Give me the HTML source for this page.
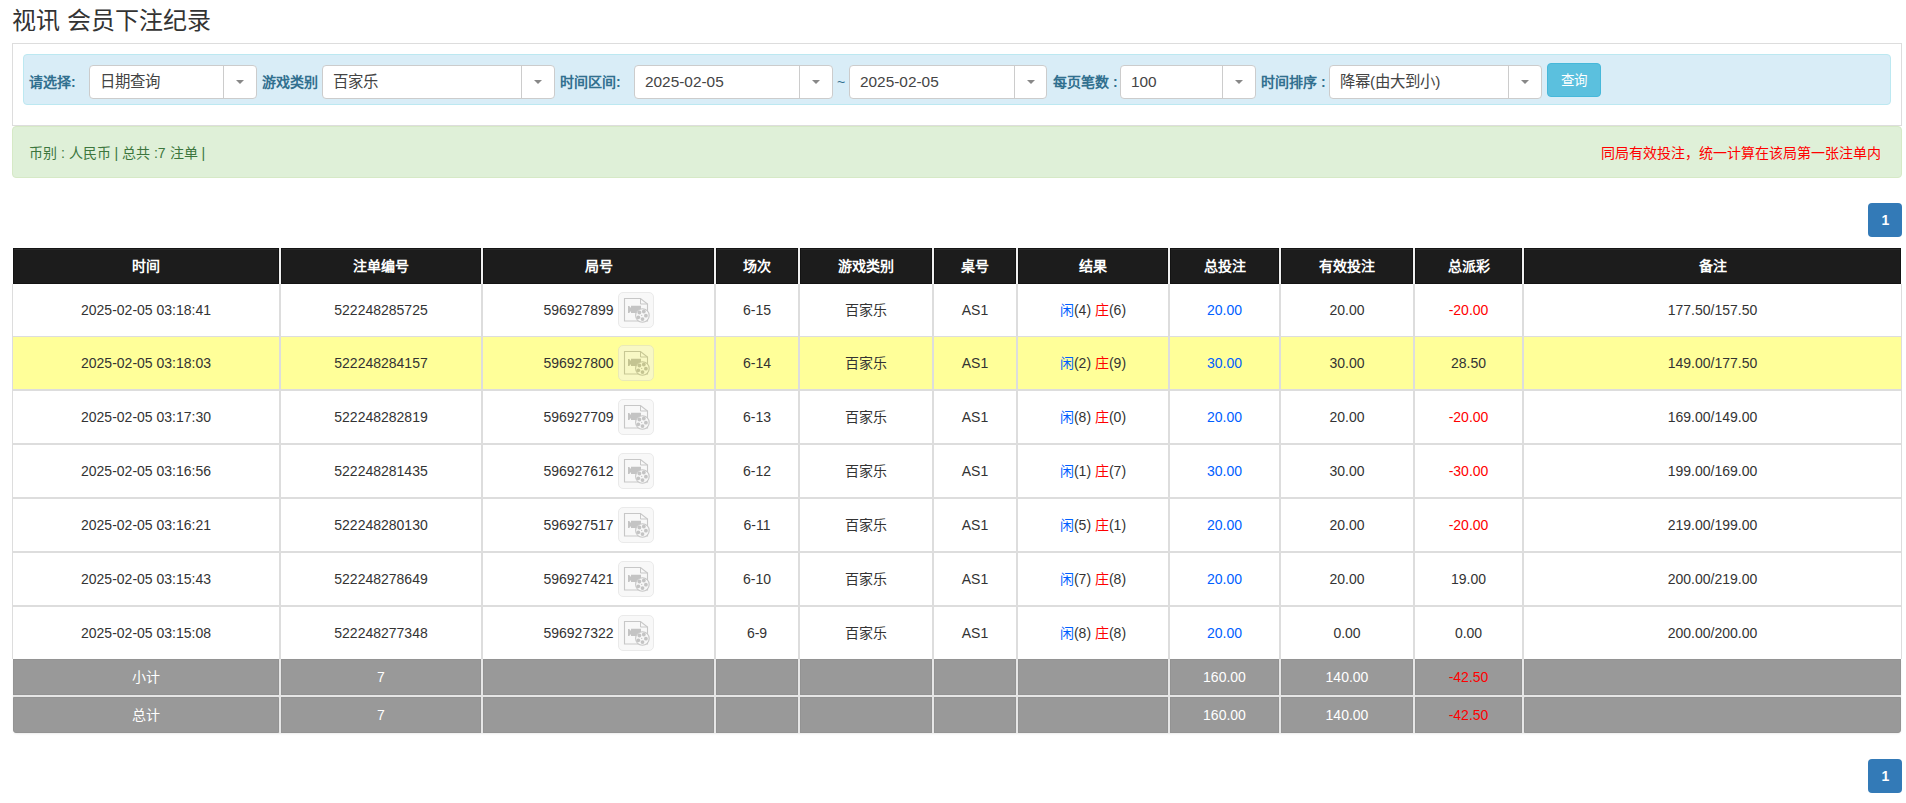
<!DOCTYPE html><html lang="zh-CN"><head><meta charset="utf-8"><style>
*{box-sizing:border-box;margin:0;padding:0}
html,body{width:1906px;height:803px;overflow:hidden;background:#fff}
body{font-family:"Liberation Sans", sans-serif;color:#333;font-size:14px;position:relative}
.a{position:absolute}
.title{left:12px;top:5px;font-size:24px;line-height:32px;color:#333;white-space:nowrap}
.panel{left:12px;top:43px;width:1890px;height:83px;border:1px solid #ddd;background:#fff}
.info{left:23px;top:54px;width:1868px;height:51px;background:#d9edf7;border:1px solid #bce8f1;border-radius:4px}
.lbl{font-size:14px;font-weight:bold;color:#31708f;line-height:20px;top:72px;white-space:nowrap}
.sel{top:65px;height:34px;background:#fff;border:1px solid #ccc;border-radius:4px}
.sel .t{position:absolute;left:10px;top:0;line-height:32px;font-size:15.4px;color:#444;white-space:nowrap}
.sel .d{position:absolute;top:0;bottom:0;width:1px;background:#ccc}
.sel .ar{position:absolute;top:14px;width:0;height:0;border-left:4px solid transparent;border-right:4px solid transparent;border-top:4px solid #888}
.btn{left:1547px;top:63px;width:54px;height:34px;background:#5bc0de;border:1px solid #46b8da;border-radius:4px;color:#fff;font-size:13.5px;line-height:33px;text-align:center}
.ok{left:12px;top:126px;width:1890px;height:52px;background:#dff0d8;border:1px solid #d6e9c6;border-radius:4px}
.okt{left:29px;top:143px;font-size:14px;line-height:20px;color:#3c763d;white-space:nowrap}
.red{right:25px;top:143px;font-size:14px;line-height:20px;color:#f00;white-space:nowrap}
.pg{left:1868px;width:34px;height:34px;background:#337ab7;border-radius:4px;color:#fff;font-size:14px;font-weight:bold;line-height:34px;text-align:center;padding-left:1px}
.hd{background:#1c1c1c;border:1px solid #131313;border-top-color:#151515;box-shadow:inset 0 1px 0 #2a2a2a;color:#fff;font-weight:bold;font-size:14px;text-align:center;line-height:34px}
.c{background:#fff;text-align:center;font-size:14px;color:#333;white-space:nowrap}
.y{background:#ffff99}
.g{background:#999;border:1px solid #939393;color:#fff;text-align:center;font-size:14px;line-height:34px;white-space:nowrap}
.bl{color:#0060ff}
.rd{color:#ff0000}
.ic{display:inline-block;vertical-align:top;margin-top:8px;width:36px;height:36px;border:1px solid #d6d6d6;border-radius:5px;background:#f2f2f2;opacity:.5;position:relative;margin-left:4px}
</style></head><body><div class="a title">视讯 会员下注纪录</div>
<div class="a panel"></div>
<div class="a info"></div>
<div class="a lbl" style="left:29px">请选择:</div>
<div class="a sel" style="left:89px;width:168px"><span class="t">日期查询</span><i class="d" style="left:133px"></i><i class="ar" style="left:146px"></i></div>
<div class="a lbl" style="left:262px">游戏类别</div>
<div class="a sel" style="left:322px;width:233px"><span class="t">百家乐</span><i class="d" style="left:198px"></i><i class="ar" style="left:211px"></i></div>
<div class="a lbl" style="left:560px">时间区间:</div>
<div class="a sel" style="left:634px;width:199px"><span class="t">2025-02-05</span><i class="d" style="left:164px"></i><i class="ar" style="left:177px"></i></div>
<div class="a lbl" style="left:837px;font-weight:normal">~</div>
<div class="a sel" style="left:849px;width:198px"><span class="t">2025-02-05</span><i class="d" style="left:164px"></i><i class="ar" style="left:177px"></i></div>
<div class="a lbl" style="left:1053px">每页笔数 :</div>
<div class="a sel" style="left:1120px;width:136px"><span class="t">100</span><i class="d" style="left:101px"></i><i class="ar" style="left:114px"></i></div>
<div class="a lbl" style="left:1261px">时间排序 :</div>
<div class="a sel" style="left:1329px;width:213px"><span class="t">降幂(由大到小)</span><i class="d" style="left:178px"></i><i class="ar" style="left:191px"></i></div>
<div class="a btn">查询</div>
<div class="a ok"></div>
<div class="a okt">币别 : 人民币 | 总共 :7 注单 |</div>
<div class="a red">同局有效投注，统一计算在该局第一张注单内</div>
<div class="a pg" style="top:203px">1</div>
<div class="a pg" style="top:759px">1</div>
<div class="a" style="left:12px;top:284px;width:1890px;height:375px;background:#ddd"></div>
<div class="a" style="left:13px;top:248px;width:1888px;height:36px;background:#f0f0f0"></div>
<div class="a hd" style="left:13px;top:248px;width:266px;height:36px">时间</div>
<div class="a hd" style="left:281px;top:248px;width:200px;height:36px">注单编号</div>
<div class="a hd" style="left:483px;top:248px;width:231px;height:36px">局号</div>
<div class="a hd" style="left:716px;top:248px;width:82px;height:36px">场次</div>
<div class="a hd" style="left:800px;top:248px;width:132px;height:36px">游戏类别</div>
<div class="a hd" style="left:934px;top:248px;width:82px;height:36px">桌号</div>
<div class="a hd" style="left:1018px;top:248px;width:150px;height:36px">结果</div>
<div class="a hd" style="left:1170px;top:248px;width:109px;height:36px">总投注</div>
<div class="a hd" style="left:1281px;top:248px;width:132px;height:36px">有效投注</div>
<div class="a hd" style="left:1415px;top:248px;width:107px;height:36px">总派彩</div>
<div class="a hd" style="left:1524px;top:248px;width:377px;height:36px">备注</div>
<div class="a c" style="left:13px;top:284px;width:266px;height:52px;line-height:52px">2025-02-05 03:18:41</div>
<div class="a c" style="left:281px;top:284px;width:200px;height:52px;line-height:52px">522248285725</div>
<div class="a c" style="left:483px;top:284px;width:231px;height:52px;line-height:52px">596927899<span class="ic"><svg width="36" height="36" viewBox="0 0 36 36" style="position:absolute;left:-1px;top:-1px"><path d="M6.5 6.5h16l7 5.5v17h-23z" fill="none" stroke="#919191" stroke-width="1.1"/><path d="M22.5 6.5v5.5h7" fill="none" stroke="#919191" stroke-width="1"/><path d="M10 14h1.2l1.8 2v-2.2h10v7.3h-10v-2.1l-1.8 2h-1.2z" fill="#8a8a8a"/><circle cx="24.4" cy="23.5" r="6.8" fill="#f0f0f0" stroke="#919191" stroke-width="1.1"/><circle cx="21.4" cy="20.5" r="1.9" fill="#8a8a8a"/><circle cx="25.8" cy="19.5" r="1.9" fill="#8a8a8a"/><circle cx="27.9" cy="23.7" r="1.9" fill="#8a8a8a"/><circle cx="24.5" cy="27.1" r="1.9" fill="#8a8a8a"/><circle cx="20.3" cy="25.3" r="1.9" fill="#8a8a8a"/><circle cx="23.7" cy="23.4" r="0.6" fill="#8a8a8a"/></svg></span></div>
<div class="a c" style="left:716px;top:284px;width:82px;height:52px;line-height:52px">6-15</div>
<div class="a c" style="left:800px;top:284px;width:132px;height:52px;line-height:52px">百家乐</div>
<div class="a c" style="left:934px;top:284px;width:82px;height:52px;line-height:52px">AS1</div>
<div class="a c" style="left:1018px;top:284px;width:150px;height:52px;line-height:52px"><span class="bl">闲</span>(4) <span class="rd">庄</span>(6)</div>
<div class="a c" style="left:1170px;top:284px;width:109px;height:52px;line-height:52px"><span class="bl">20.00</span></div>
<div class="a c" style="left:1281px;top:284px;width:132px;height:52px;line-height:52px">20.00</div>
<div class="a c" style="left:1415px;top:284px;width:107px;height:52px;line-height:52px"><span class="rd">-20.00</span></div>
<div class="a c" style="left:1524px;top:284px;width:377px;height:52px;line-height:52px">177.50/157.50</div>
<div class="a c y" style="left:13px;top:337px;width:266px;height:52px;line-height:52px">2025-02-05 03:18:03</div>
<div class="a c y" style="left:281px;top:337px;width:200px;height:52px;line-height:52px">522248284157</div>
<div class="a c y" style="left:483px;top:337px;width:231px;height:52px;line-height:52px">596927800<span class="ic"><svg width="36" height="36" viewBox="0 0 36 36" style="position:absolute;left:-1px;top:-1px"><path d="M6.5 6.5h16l7 5.5v17h-23z" fill="none" stroke="#919191" stroke-width="1.1"/><path d="M22.5 6.5v5.5h7" fill="none" stroke="#919191" stroke-width="1"/><path d="M10 14h1.2l1.8 2v-2.2h10v7.3h-10v-2.1l-1.8 2h-1.2z" fill="#8a8a8a"/><circle cx="24.4" cy="23.5" r="6.8" fill="#f0f0f0" stroke="#919191" stroke-width="1.1"/><circle cx="21.4" cy="20.5" r="1.9" fill="#8a8a8a"/><circle cx="25.8" cy="19.5" r="1.9" fill="#8a8a8a"/><circle cx="27.9" cy="23.7" r="1.9" fill="#8a8a8a"/><circle cx="24.5" cy="27.1" r="1.9" fill="#8a8a8a"/><circle cx="20.3" cy="25.3" r="1.9" fill="#8a8a8a"/><circle cx="23.7" cy="23.4" r="0.6" fill="#8a8a8a"/></svg></span></div>
<div class="a c y" style="left:716px;top:337px;width:82px;height:52px;line-height:52px">6-14</div>
<div class="a c y" style="left:800px;top:337px;width:132px;height:52px;line-height:52px">百家乐</div>
<div class="a c y" style="left:934px;top:337px;width:82px;height:52px;line-height:52px">AS1</div>
<div class="a c y" style="left:1018px;top:337px;width:150px;height:52px;line-height:52px"><span class="bl">闲</span>(2) <span class="rd">庄</span>(9)</div>
<div class="a c y" style="left:1170px;top:337px;width:109px;height:52px;line-height:52px"><span class="bl">30.00</span></div>
<div class="a c y" style="left:1281px;top:337px;width:132px;height:52px;line-height:52px">30.00</div>
<div class="a c y" style="left:1415px;top:337px;width:107px;height:52px;line-height:52px">28.50</div>
<div class="a c y" style="left:1524px;top:337px;width:377px;height:52px;line-height:52px">149.00/177.50</div>
<div class="a c" style="left:13px;top:391px;width:266px;height:52px;line-height:52px">2025-02-05 03:17:30</div>
<div class="a c" style="left:281px;top:391px;width:200px;height:52px;line-height:52px">522248282819</div>
<div class="a c" style="left:483px;top:391px;width:231px;height:52px;line-height:52px">596927709<span class="ic"><svg width="36" height="36" viewBox="0 0 36 36" style="position:absolute;left:-1px;top:-1px"><path d="M6.5 6.5h16l7 5.5v17h-23z" fill="none" stroke="#919191" stroke-width="1.1"/><path d="M22.5 6.5v5.5h7" fill="none" stroke="#919191" stroke-width="1"/><path d="M10 14h1.2l1.8 2v-2.2h10v7.3h-10v-2.1l-1.8 2h-1.2z" fill="#8a8a8a"/><circle cx="24.4" cy="23.5" r="6.8" fill="#f0f0f0" stroke="#919191" stroke-width="1.1"/><circle cx="21.4" cy="20.5" r="1.9" fill="#8a8a8a"/><circle cx="25.8" cy="19.5" r="1.9" fill="#8a8a8a"/><circle cx="27.9" cy="23.7" r="1.9" fill="#8a8a8a"/><circle cx="24.5" cy="27.1" r="1.9" fill="#8a8a8a"/><circle cx="20.3" cy="25.3" r="1.9" fill="#8a8a8a"/><circle cx="23.7" cy="23.4" r="0.6" fill="#8a8a8a"/></svg></span></div>
<div class="a c" style="left:716px;top:391px;width:82px;height:52px;line-height:52px">6-13</div>
<div class="a c" style="left:800px;top:391px;width:132px;height:52px;line-height:52px">百家乐</div>
<div class="a c" style="left:934px;top:391px;width:82px;height:52px;line-height:52px">AS1</div>
<div class="a c" style="left:1018px;top:391px;width:150px;height:52px;line-height:52px"><span class="bl">闲</span>(8) <span class="rd">庄</span>(0)</div>
<div class="a c" style="left:1170px;top:391px;width:109px;height:52px;line-height:52px"><span class="bl">20.00</span></div>
<div class="a c" style="left:1281px;top:391px;width:132px;height:52px;line-height:52px">20.00</div>
<div class="a c" style="left:1415px;top:391px;width:107px;height:52px;line-height:52px"><span class="rd">-20.00</span></div>
<div class="a c" style="left:1524px;top:391px;width:377px;height:52px;line-height:52px">169.00/149.00</div>
<div class="a c" style="left:13px;top:445px;width:266px;height:52px;line-height:52px">2025-02-05 03:16:56</div>
<div class="a c" style="left:281px;top:445px;width:200px;height:52px;line-height:52px">522248281435</div>
<div class="a c" style="left:483px;top:445px;width:231px;height:52px;line-height:52px">596927612<span class="ic"><svg width="36" height="36" viewBox="0 0 36 36" style="position:absolute;left:-1px;top:-1px"><path d="M6.5 6.5h16l7 5.5v17h-23z" fill="none" stroke="#919191" stroke-width="1.1"/><path d="M22.5 6.5v5.5h7" fill="none" stroke="#919191" stroke-width="1"/><path d="M10 14h1.2l1.8 2v-2.2h10v7.3h-10v-2.1l-1.8 2h-1.2z" fill="#8a8a8a"/><circle cx="24.4" cy="23.5" r="6.8" fill="#f0f0f0" stroke="#919191" stroke-width="1.1"/><circle cx="21.4" cy="20.5" r="1.9" fill="#8a8a8a"/><circle cx="25.8" cy="19.5" r="1.9" fill="#8a8a8a"/><circle cx="27.9" cy="23.7" r="1.9" fill="#8a8a8a"/><circle cx="24.5" cy="27.1" r="1.9" fill="#8a8a8a"/><circle cx="20.3" cy="25.3" r="1.9" fill="#8a8a8a"/><circle cx="23.7" cy="23.4" r="0.6" fill="#8a8a8a"/></svg></span></div>
<div class="a c" style="left:716px;top:445px;width:82px;height:52px;line-height:52px">6-12</div>
<div class="a c" style="left:800px;top:445px;width:132px;height:52px;line-height:52px">百家乐</div>
<div class="a c" style="left:934px;top:445px;width:82px;height:52px;line-height:52px">AS1</div>
<div class="a c" style="left:1018px;top:445px;width:150px;height:52px;line-height:52px"><span class="bl">闲</span>(1) <span class="rd">庄</span>(7)</div>
<div class="a c" style="left:1170px;top:445px;width:109px;height:52px;line-height:52px"><span class="bl">30.00</span></div>
<div class="a c" style="left:1281px;top:445px;width:132px;height:52px;line-height:52px">30.00</div>
<div class="a c" style="left:1415px;top:445px;width:107px;height:52px;line-height:52px"><span class="rd">-30.00</span></div>
<div class="a c" style="left:1524px;top:445px;width:377px;height:52px;line-height:52px">199.00/169.00</div>
<div class="a c" style="left:13px;top:499px;width:266px;height:52px;line-height:52px">2025-02-05 03:16:21</div>
<div class="a c" style="left:281px;top:499px;width:200px;height:52px;line-height:52px">522248280130</div>
<div class="a c" style="left:483px;top:499px;width:231px;height:52px;line-height:52px">596927517<span class="ic"><svg width="36" height="36" viewBox="0 0 36 36" style="position:absolute;left:-1px;top:-1px"><path d="M6.5 6.5h16l7 5.5v17h-23z" fill="none" stroke="#919191" stroke-width="1.1"/><path d="M22.5 6.5v5.5h7" fill="none" stroke="#919191" stroke-width="1"/><path d="M10 14h1.2l1.8 2v-2.2h10v7.3h-10v-2.1l-1.8 2h-1.2z" fill="#8a8a8a"/><circle cx="24.4" cy="23.5" r="6.8" fill="#f0f0f0" stroke="#919191" stroke-width="1.1"/><circle cx="21.4" cy="20.5" r="1.9" fill="#8a8a8a"/><circle cx="25.8" cy="19.5" r="1.9" fill="#8a8a8a"/><circle cx="27.9" cy="23.7" r="1.9" fill="#8a8a8a"/><circle cx="24.5" cy="27.1" r="1.9" fill="#8a8a8a"/><circle cx="20.3" cy="25.3" r="1.9" fill="#8a8a8a"/><circle cx="23.7" cy="23.4" r="0.6" fill="#8a8a8a"/></svg></span></div>
<div class="a c" style="left:716px;top:499px;width:82px;height:52px;line-height:52px">6-11</div>
<div class="a c" style="left:800px;top:499px;width:132px;height:52px;line-height:52px">百家乐</div>
<div class="a c" style="left:934px;top:499px;width:82px;height:52px;line-height:52px">AS1</div>
<div class="a c" style="left:1018px;top:499px;width:150px;height:52px;line-height:52px"><span class="bl">闲</span>(5) <span class="rd">庄</span>(1)</div>
<div class="a c" style="left:1170px;top:499px;width:109px;height:52px;line-height:52px"><span class="bl">20.00</span></div>
<div class="a c" style="left:1281px;top:499px;width:132px;height:52px;line-height:52px">20.00</div>
<div class="a c" style="left:1415px;top:499px;width:107px;height:52px;line-height:52px"><span class="rd">-20.00</span></div>
<div class="a c" style="left:1524px;top:499px;width:377px;height:52px;line-height:52px">219.00/199.00</div>
<div class="a c" style="left:13px;top:553px;width:266px;height:52px;line-height:52px">2025-02-05 03:15:43</div>
<div class="a c" style="left:281px;top:553px;width:200px;height:52px;line-height:52px">522248278649</div>
<div class="a c" style="left:483px;top:553px;width:231px;height:52px;line-height:52px">596927421<span class="ic"><svg width="36" height="36" viewBox="0 0 36 36" style="position:absolute;left:-1px;top:-1px"><path d="M6.5 6.5h16l7 5.5v17h-23z" fill="none" stroke="#919191" stroke-width="1.1"/><path d="M22.5 6.5v5.5h7" fill="none" stroke="#919191" stroke-width="1"/><path d="M10 14h1.2l1.8 2v-2.2h10v7.3h-10v-2.1l-1.8 2h-1.2z" fill="#8a8a8a"/><circle cx="24.4" cy="23.5" r="6.8" fill="#f0f0f0" stroke="#919191" stroke-width="1.1"/><circle cx="21.4" cy="20.5" r="1.9" fill="#8a8a8a"/><circle cx="25.8" cy="19.5" r="1.9" fill="#8a8a8a"/><circle cx="27.9" cy="23.7" r="1.9" fill="#8a8a8a"/><circle cx="24.5" cy="27.1" r="1.9" fill="#8a8a8a"/><circle cx="20.3" cy="25.3" r="1.9" fill="#8a8a8a"/><circle cx="23.7" cy="23.4" r="0.6" fill="#8a8a8a"/></svg></span></div>
<div class="a c" style="left:716px;top:553px;width:82px;height:52px;line-height:52px">6-10</div>
<div class="a c" style="left:800px;top:553px;width:132px;height:52px;line-height:52px">百家乐</div>
<div class="a c" style="left:934px;top:553px;width:82px;height:52px;line-height:52px">AS1</div>
<div class="a c" style="left:1018px;top:553px;width:150px;height:52px;line-height:52px"><span class="bl">闲</span>(7) <span class="rd">庄</span>(8)</div>
<div class="a c" style="left:1170px;top:553px;width:109px;height:52px;line-height:52px"><span class="bl">20.00</span></div>
<div class="a c" style="left:1281px;top:553px;width:132px;height:52px;line-height:52px">20.00</div>
<div class="a c" style="left:1415px;top:553px;width:107px;height:52px;line-height:52px">19.00</div>
<div class="a c" style="left:1524px;top:553px;width:377px;height:52px;line-height:52px">200.00/219.00</div>
<div class="a c" style="left:13px;top:607px;width:266px;height:52px;line-height:52px">2025-02-05 03:15:08</div>
<div class="a c" style="left:281px;top:607px;width:200px;height:52px;line-height:52px">522248277348</div>
<div class="a c" style="left:483px;top:607px;width:231px;height:52px;line-height:52px">596927322<span class="ic"><svg width="36" height="36" viewBox="0 0 36 36" style="position:absolute;left:-1px;top:-1px"><path d="M6.5 6.5h16l7 5.5v17h-23z" fill="none" stroke="#919191" stroke-width="1.1"/><path d="M22.5 6.5v5.5h7" fill="none" stroke="#919191" stroke-width="1"/><path d="M10 14h1.2l1.8 2v-2.2h10v7.3h-10v-2.1l-1.8 2h-1.2z" fill="#8a8a8a"/><circle cx="24.4" cy="23.5" r="6.8" fill="#f0f0f0" stroke="#919191" stroke-width="1.1"/><circle cx="21.4" cy="20.5" r="1.9" fill="#8a8a8a"/><circle cx="25.8" cy="19.5" r="1.9" fill="#8a8a8a"/><circle cx="27.9" cy="23.7" r="1.9" fill="#8a8a8a"/><circle cx="24.5" cy="27.1" r="1.9" fill="#8a8a8a"/><circle cx="20.3" cy="25.3" r="1.9" fill="#8a8a8a"/><circle cx="23.7" cy="23.4" r="0.6" fill="#8a8a8a"/></svg></span></div>
<div class="a c" style="left:716px;top:607px;width:82px;height:52px;line-height:52px">6-9</div>
<div class="a c" style="left:800px;top:607px;width:132px;height:52px;line-height:52px">百家乐</div>
<div class="a c" style="left:934px;top:607px;width:82px;height:52px;line-height:52px">AS1</div>
<div class="a c" style="left:1018px;top:607px;width:150px;height:52px;line-height:52px"><span class="bl">闲</span>(8) <span class="rd">庄</span>(8)</div>
<div class="a c" style="left:1170px;top:607px;width:109px;height:52px;line-height:52px"><span class="bl">20.00</span></div>
<div class="a c" style="left:1281px;top:607px;width:132px;height:52px;line-height:52px">0.00</div>
<div class="a c" style="left:1415px;top:607px;width:107px;height:52px;line-height:52px">0.00</div>
<div class="a c" style="left:1524px;top:607px;width:377px;height:52px;line-height:52px">200.00/200.00</div>
<div class="a" style="left:13px;top:659px;width:1888px;height:74px;background:#e6e6e6;border-radius:0 0 4px 4px;box-shadow:0 1px 2px rgba(0,0,0,.08)"></div>
<div class="a g" style="left:13px;top:659px;width:266px;height:36px;">小计</div>
<div class="a g" style="left:281px;top:659px;width:200px;height:36px;">7</div>
<div class="a g" style="left:483px;top:659px;width:231px;height:36px;"></div>
<div class="a g" style="left:716px;top:659px;width:82px;height:36px;"></div>
<div class="a g" style="left:800px;top:659px;width:132px;height:36px;"></div>
<div class="a g" style="left:934px;top:659px;width:82px;height:36px;"></div>
<div class="a g" style="left:1018px;top:659px;width:150px;height:36px;"></div>
<div class="a g" style="left:1170px;top:659px;width:109px;height:36px;">160.00</div>
<div class="a g" style="left:1281px;top:659px;width:132px;height:36px;">140.00</div>
<div class="a g" style="left:1415px;top:659px;width:107px;height:36px;"><span class="rd">-42.50</span></div>
<div class="a g" style="left:1524px;top:659px;width:377px;height:36px;"></div>
<div class="a g" style="left:13px;top:697px;width:266px;height:36px;border-bottom-left-radius:3px;">总计</div>
<div class="a g" style="left:281px;top:697px;width:200px;height:36px;">7</div>
<div class="a g" style="left:483px;top:697px;width:231px;height:36px;"></div>
<div class="a g" style="left:716px;top:697px;width:82px;height:36px;"></div>
<div class="a g" style="left:800px;top:697px;width:132px;height:36px;"></div>
<div class="a g" style="left:934px;top:697px;width:82px;height:36px;"></div>
<div class="a g" style="left:1018px;top:697px;width:150px;height:36px;"></div>
<div class="a g" style="left:1170px;top:697px;width:109px;height:36px;">160.00</div>
<div class="a g" style="left:1281px;top:697px;width:132px;height:36px;">140.00</div>
<div class="a g" style="left:1415px;top:697px;width:107px;height:36px;"><span class="rd">-42.50</span></div>
<div class="a g" style="left:1524px;top:697px;width:377px;height:36px;border-bottom-right-radius:3px;"></div></body></html>
